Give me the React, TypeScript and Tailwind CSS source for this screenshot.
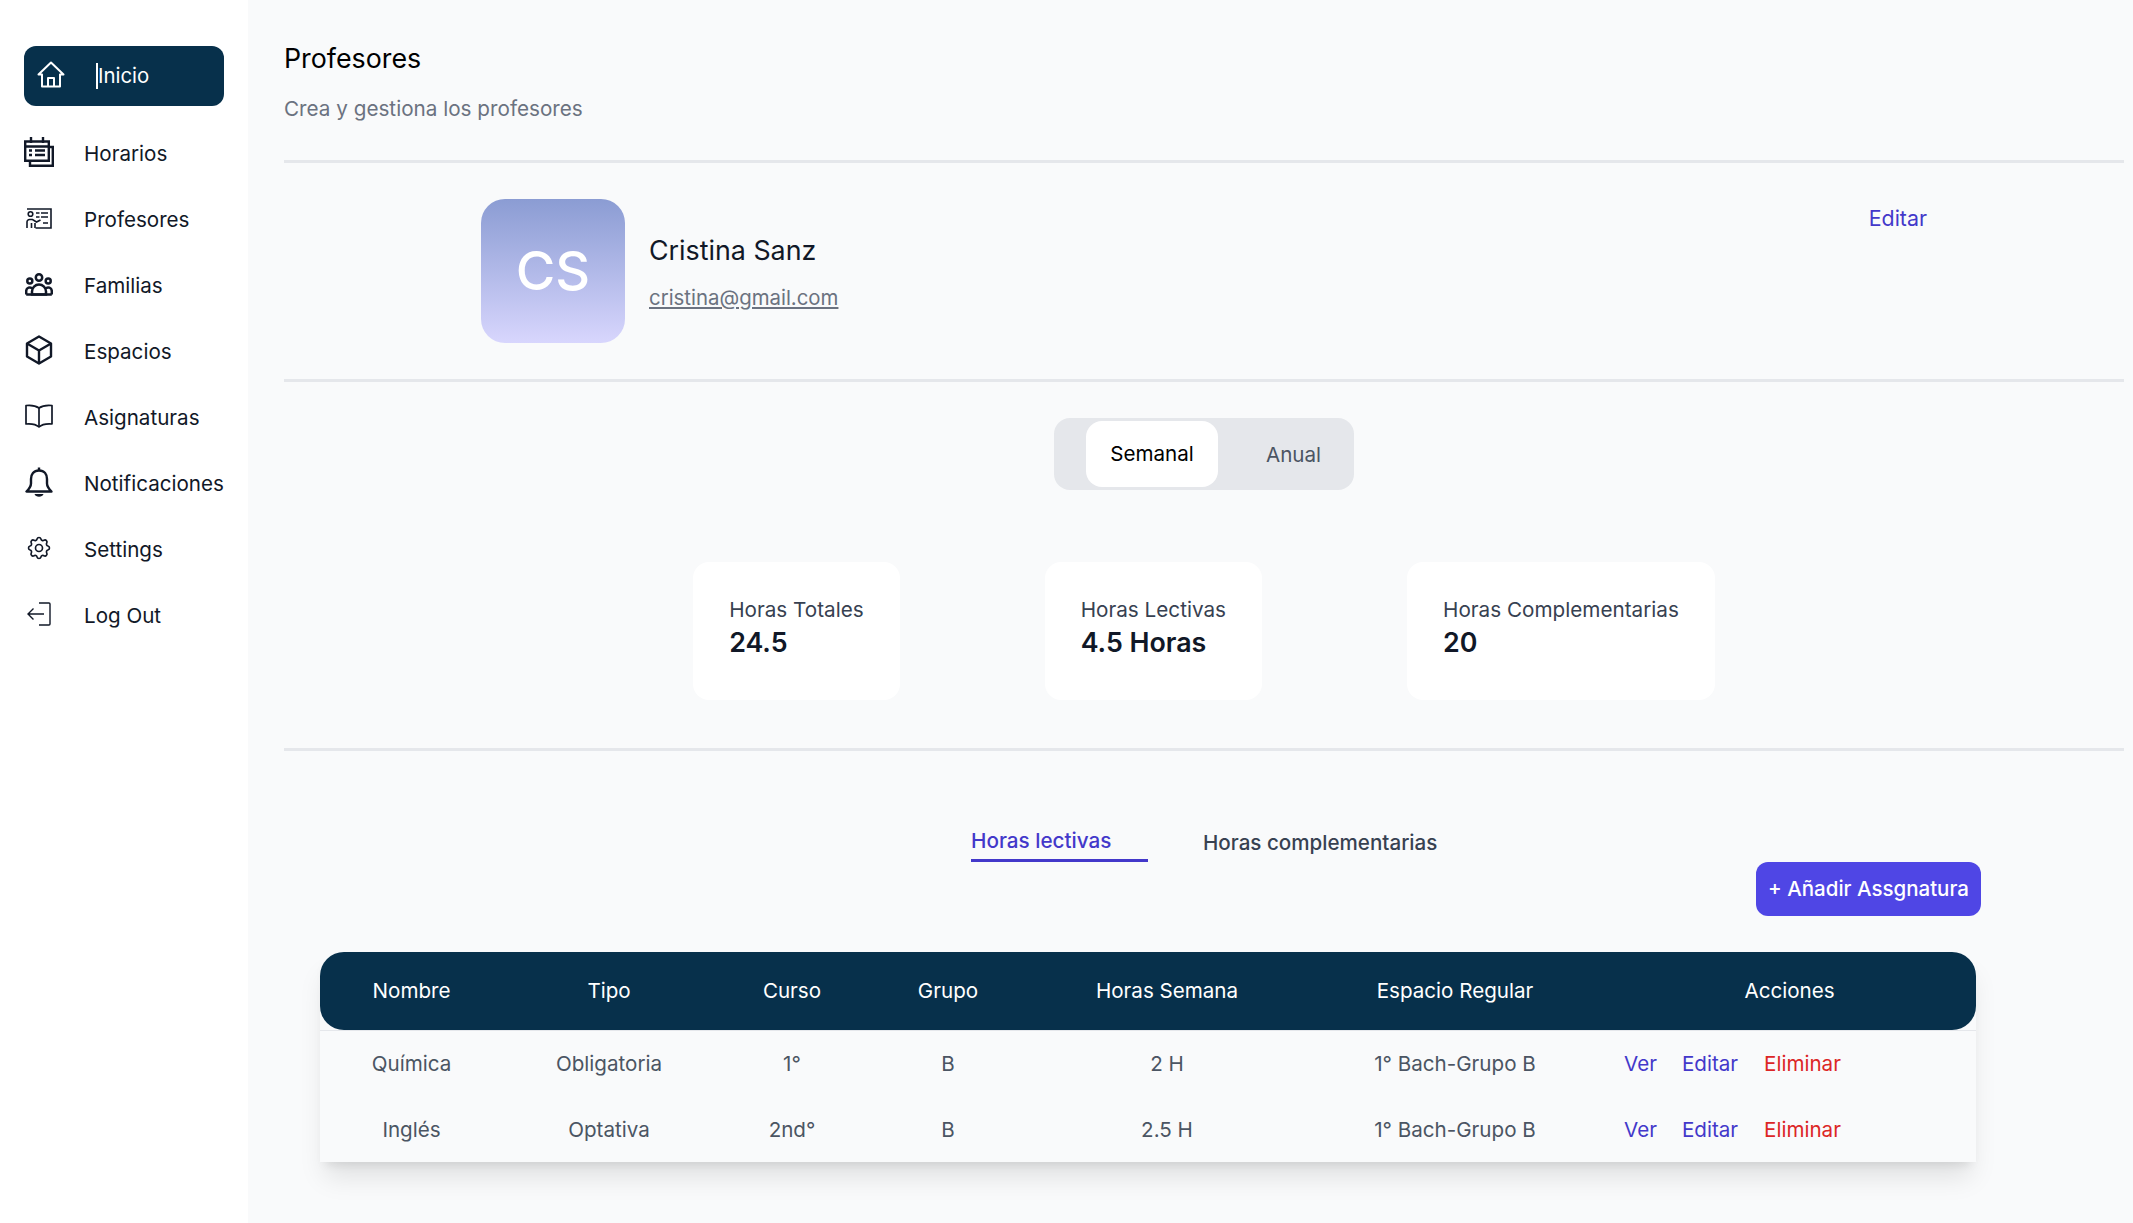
import React from 'react';
import { HiOutlineCog } from 'react-icons/hi';

const HomeIcon = () => (
  <svg width="28" height="27" viewBox="0 0 28 27" fill="none" stroke="currentColor" strokeWidth="2" strokeLinejoin="round">
    <path d="M14 1.500 26.500 13.500H23V25.500H5V13.500H1.500Z" />
    <path d="M11 25.500V17H17V25.500" />
  </svg>
);

const CalendarIcon = () => (
  <svg width="30" height="30" viewBox="0 0 30 30" fill="none" stroke="currentColor" strokeWidth="2.400">
    <path d="M1.200 4.500h23.600v19.300H1.200z" />
    <path d="M1.200 9.500h23.600M7 0v6M19 0v6" />
    <path d="M5 13.500h3M11 13.500h10M5 18h3M11 18h10" />
    <path d="M24.800 10h4v18.800H6v-5" />
  </svg>
);

const TeacherIcon = () => (
  <svg width="26" height="21" viewBox="0 0 26 21" fill="none" stroke="currentColor" strokeWidth="1.600">
    <path d="M1 1h24v19H9.500" />
    <circle cx="4.500" cy="6" r="2.300" />
    <path d="M1 20v-6a2.500 2.500 0 0 1 2.500-2.500h3l4 2.500 4-2M5.500 20v-5M9 20v-5" />
    <path d="M10 5h3.500M15 5h7M10 9h3.500M15 9h7M17 15h5" />
  </svg>
);

const FamilyIcon = () => (
  <svg width="28" height="23" viewBox="0 0 28 23" fill="none" stroke="currentColor" strokeWidth="2.500">
    <circle cx="14" cy="4.500" r="3.200" />
    <circle cx="4.800" cy="8" r="2.500" />
    <circle cx="23.200" cy="8" r="2.500" />
    <path d="M7 21.500v-3a7 7 0 0 1 14 0v3z" />
    <path d="M1.200 21.500v-3.500a3.600 3.600 0 0 1 6.300-2.300M26.800 21.500v-3.500a3.600 3.600 0 0 0-6.300-2.300M1.200 21.500h25.600" />
  </svg>
);

const CubeIcon = () => (
  <svg width="28" height="30" viewBox="0 0 28 30" fill="none" stroke="currentColor" strokeWidth="2.400" strokeLinejoin="round">
    <path d="M14 1.500 26 8.500V21.500L14 28.500 2 21.500V8.500Z" />
    <path d="M2 8.500 14 15.500 26 8.500M14 15.500V28.500" />
  </svg>
);

const BookIcon = () => (
  <svg width="28" height="24" viewBox="0 0 28 24" fill="none" stroke="currentColor" strokeWidth="1.700" strokeLinejoin="round">
    <path d="M14 4C11 1.800 6 1 1 1.500V20C6 19.600 11 20.200 14 23 17 20.200 22 19.600 27 20V1.500C22 1 17 1.800 14 4Z" />
    <path d="M14 4V23" />
  </svg>
);

const BellIcon = () => (
  <svg width="28" height="30" viewBox="0 0 28 30" fill="none" stroke="currentColor" strokeWidth="2.400" strokeLinejoin="round">
    <path d="M14 3.500C8.500 3.500 6 7.500 6 12V16.500C6 20 3.500 22.500 1.500 24.500H26.500C24.500 22.500 22 20 22 16.500V12C22 7.500 19.500 3.500 14 3.500Z" />
    <path d="M14 0.500V3.500" />
    <path d="M9.500 27H18.500C17.500 30.700 10.500 30.700 9.500 27Z" fill="currentColor" stroke="none" />
  </svg>
);

const LogOutIcon = () => (
  <svg width="24" height="24" viewBox="0 0 24 24" fill="none" stroke="currentColor" strokeWidth="1.400">
    <path d="M12 1h10a1 1 0 0 1 1 1v20a1 1 0 0 1-1 1H12" />
    <path d="M17 12H1M6.500 6.500 1 12l5.500 5.500" />
  </svg>
);

const navItems = [
  { label: 'Horarios', icon: <CalendarIcon /> },
  { label: 'Profesores', icon: <TeacherIcon /> },
  { label: 'Familias', icon: <FamilyIcon /> },
  { label: 'Espacios', icon: <CubeIcon /> },
  { label: 'Asignaturas', icon: <BookIcon /> },
  { label: 'Notificaciones', icon: <BellIcon /> },
  { label: 'Settings', icon: <HiOutlineCog size={28} strokeWidth={1.4} /> },
  { label: 'Log Out', icon: <LogOutIcon /> },
];

const stats = [
  { label: 'Horas Totales', value: '24.5' },
  { label: 'Horas Lectivas', value: '4.5 Horas' },
  { label: 'Horas Complementarias', value: '20' },
];

const rows = [
  { nombre: 'Química', tipo: 'Obligatoria', curso: '1°', grupo: 'B', horas: '2 H', espacio: '1° Bach-Grupo B' },
  { nombre: 'Inglés', tipo: 'Optativa', curso: '2nd°', grupo: 'B', horas: '2.5 H', espacio: '1° Bach-Grupo B' },
];

const headers = ['Nombre', 'Tipo', 'Curso', 'Grupo', 'Horas Semana', 'Espacio Regular', 'Acciones'];

const Divider = () => <div className="h-[3px] bg-[#e5e7eb]" />;

export default function App() {
  return (
    <div className="flex h-[1223px] overflow-hidden bg-[#f9fafb] font-['Inter',sans-serif]">
      <aside className="w-[248px] shrink-0 bg-white pl-6 pt-[46px]">
        <div className="flex h-[60px] w-[200px] items-center rounded-xl bg-[#07304b] pl-[13px] text-white">
          <div className="pb-[3px]"><HomeIcon /></div>
          <span className="ml-[31px] border-l-2 border-white text-[20.4px] leading-[26px]">Inicio</span>
        </div>
        <nav className="mt-[15px]">
          {navItems.map((item) => (
            <div key={item.label} className="flex h-[66px] items-center text-[#111827]">
              <div className="flex w-[30px] shrink-0 justify-center pb-1">{item.icon}</div>
              <span className="ml-[30px] whitespace-nowrap text-[20.6px]">{item.label}</span>
            </div>
          ))}
        </nav>
      </aside>

      <main className="min-w-0 flex-1 pl-[36px] pr-[9px]">
        <header className="h-[160px] pt-[40px]">
          <h1 className="text-[26.8px] leading-[36px] text-black">Profesores</h1>
          <p className="mt-[19px] text-[20.7px] leading-7 text-[#6b7280]">Crea y gestiona los profesores</p>
        </header>
        <Divider />

        <section className="flex h-[216px] justify-between pl-[197px] pr-[197px] pt-[36px]">
          <div className="flex">
            <div className="flex h-[144px] w-[144px] items-center justify-center rounded-3xl bg-gradient-to-b from-[#8b9cd3] to-[#d8d6fd] pb-[2px] text-[54px] font-medium text-white">
              CS
            </div>
            <div className="ml-6 pt-[33px]">
              <p className="text-[26.8px] leading-9 text-[#111827]">Cristina Sanz</p>
              <a className="mt-[16px] block text-[20.4px] leading-7 text-[#6b7280] underline">cristina@gmail.com</a>
            </div>
          </div>
          <a className="mt-[5px] text-[21.4px] leading-7 text-[#4338ca]">Editar</a>
        </section>
        <Divider />

        <section className="flex justify-center pt-[36px]">
          <div className="flex h-[72px] w-[300px] items-center rounded-2xl bg-[#e5e7eb] pl-8">
            <button className="h-[66px] w-[132px] rounded-2xl bg-white text-[20.6px] text-black">Semanal</button>
            <button className="ml-[33px] mt-[2px] w-[85px] text-center text-[20.6px] text-[#4b5563]">Anual</button>
          </div>
        </section>

        <section className="mt-[72px] flex justify-center gap-[145px]">
          {stats.map((stat) => (
            <div key={stat.label} className="h-[138px] rounded-2xl bg-white px-9 pt-[34px]">
              <p className="whitespace-nowrap text-[20.7px] leading-7 text-[#374151]">{stat.label}</p>
              <p className="text-[26.8px] font-semibold leading-9 text-[#111827]">{stat.value}</p>
            </div>
          ))}
        </section>
        <div className="mt-[48px]"><Divider /></div>

        <section className="relative h-[201px]">
          <div className="flex pl-[687px] pt-[74px]">
            <div className="h-[37px] w-[177px] border-b-[3px] border-[#4338ca] pt-[2px] text-[20.7px] font-medium leading-7 text-[#4338ca]">Horas lectivas</div>
            <div className="ml-[55px] mt-[4px] text-[20.6px] font-medium leading-7 text-[#374151]">Horas complementarias</div>
          </div>
          <button className="absolute left-[1472px] top-[111px] h-[54px] w-[225px] rounded-xl bg-[#4f46e5] text-[20.5px] font-medium text-white">
            + Añadir Assgnatura
          </button>
        </section>

        <div className="ml-[36px] w-[1656px] shadow-xl">
          <table className="w-full table-fixed border-collapse text-[20.6px]">
            <colgroup>
              <col className="w-[183px]" />
              <col className="w-[212px]" />
              <col className="w-[154px]" />
              <col className="w-[158px]" />
              <col className="w-[280px]" />
              <col className="w-[296px]" />
              <col className="w-[373px]" />
            </colgroup>
            <thead>
              <tr className="h-[78px] border-b border-[#e5e7eb] text-white">
                {headers.map((h, i) => (
                  <th
                    key={h}
                    className={`bg-[#07304b] pt-[2px] text-center font-normal ${i === 0 ? 'rounded-l-3xl' : ''} ${i === 6 ? 'rounded-r-3xl' : ''}`}
                  >
                    {h}
                  </th>
                ))}
              </tr>
            </thead>
            <tbody className="text-center text-[#4b5563]">
              {rows.map((row) => (
                <tr key={row.nombre} className="h-[66px]">
                  <td className="pt-[2px]">{row.nombre}</td>
                  <td className="pt-[2px]">{row.tipo}</td>
                  <td className="pt-[2px]">{row.curso}</td>
                  <td className="pt-[2px]">{row.grupo}</td>
                  <td className="pt-[2px]">{row.horas}</td>
                  <td className="pt-[2px]">{row.espacio}</td>
                  <td className="pl-[21px] pt-[2px] text-left">
                    <a className="text-[#4338ca]">Ver</a>
                    <a className="ml-[25px] text-[#4338ca]">Editar</a>
                    <a className="ml-[26px] text-[#dc2626]">Eliminar</a>
                  </td>
                </tr>
              ))}
            </tbody>
          </table>
        </div>
      </main>
    </div>
  );
}
